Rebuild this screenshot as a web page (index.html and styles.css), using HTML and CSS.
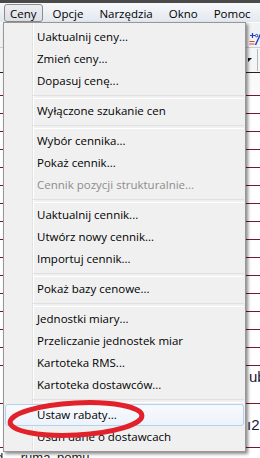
FILE: index.html
```html
<!DOCTYPE html>
<html lang="pl">
<head>
    <meta charset="UTF-8">
    <title>Ceny</title>
    <link rel="stylesheet" href="styles.css">
</head>
<body>
    <div class="window">
        <!-- Menu bar -->
        <div class="menubar">
            <span class="menubar-item active">Ceny</span>
            <span class="menubar-item">Opcje</span>
            <span class="menubar-item">Narzędzia</span>
            <span class="menubar-item">Okno</span>
            <span class="menubar-item">Pomoc</span>
        </div>

        <!-- Window content behind the menu -->
        <div class="workspace">
            <div class="toolbar">
                <svg class="tool-icon" width="12" height="14" viewBox="0 0 12 14">
                    <path d="M1 3.5h5M3.5 1v5" stroke="#1f3fbf" stroke-width="1.2" fill="none"/>
                    <path d="M0.5 9.5h5M0.5 12h5" stroke="#e0442a" stroke-width="1.2" fill="none"/>
                    <path d="M11.5 2L6.5 13" stroke="#1f3fbf" stroke-width="1.4" fill="none"/>
                    <circle cx="7.6" cy="3.6" r="1.2" stroke="#1f3fbf" fill="none"/>
                </svg>
            </div>
            <div class="combo-row">
                <span class="combo-arrow"></span>
                <span class="combo-edge"></span>
            </div>
            <div class="grid-header"></div>
            <div class="grid">
                <div class="row"></div>
                <div class="row"></div>
                <div class="row"></div>
                <div class="row"></div>
                <div class="row"></div>
                <div class="row"></div>
                <div class="row"></div>
                <div class="row"></div>
                <div class="row"></div>
                <div class="row"></div>
                <div class="row"></div>
                <div class="row"></div>
                <div class="row"></div>
                <div class="row"></div>
                <div class="row"></div>
                <div class="row tall"><span class="cell-text">ub</span></div>
                <div class="row tall second"><span class="cell-text">ı2</span></div>
                <div class="row last"><span class="cell-note">d - ruma pomu</span></div>
            </div>
        </div>

        <!-- Open "Ceny" menu -->
        <div class="dropdown">
            <div class="item">Uaktualnij ceny...</div>
            <div class="item">Zmień ceny...</div>
            <div class="item">Dopasuj cenę...</div>
            <div class="sep"></div>
            <div class="item">Wyłączone szukanie cen</div>
            <div class="sep"></div>
            <div class="item">Wybór cennika...</div>
            <div class="item">Pokaż cennik...</div>
            <div class="item disabled">Cennik pozycji strukturalnie...</div>
            <div class="sep"></div>
            <div class="item">Uaktualnij cennik...</div>
            <div class="item">Utwórz nowy cennik...</div>
            <div class="item">Importuj cennik...</div>
            <div class="sep"></div>
            <div class="item">Pokaż bazy cenowe...</div>
            <div class="sep"></div>
            <div class="item">Jednostki miary...</div>
            <div class="item">Przeliczanie jednostek miar</div>
            <div class="item">Kartoteka RMS...</div>
            <div class="item">Kartoteka dostawców...</div>
            <div class="sep"></div>
            <div class="item hover">Ustaw rabaty...</div>
            <div class="item">Usuń dane o dostawcach</div>
        </div>

        <!-- hand drawn marker -->
        <svg class="marker" width="160" height="50" viewBox="0 0 160 50">
            <ellipse cx="74" cy="24" rx="66" ry="16" transform="rotate(-3 74 24)" fill="none" stroke="#e2222b" stroke-width="5"/>
        </svg>
    </div>
</body>
</html>
```

FILE: styles.css
```css
* {
    margin: 0;
    padding: 0;
    box-sizing: border-box;
}

body {
    width: 260px;
    height: 458px;
    overflow: hidden;
    background: #fff;
    font-family: 'Open Sans', 'Noto Sans', sans-serif;
    font-size: 11.5px;
    color: #000;
}

.window {
    position: relative;
    width: 260px;
    height: 458px;
    overflow: hidden;
}

/* menu bar */

.menubar {
    display: flex;
    height: 22px;
    padding-top: 1px;
    padding-left: 2px;
    border-top: 3px solid #4a4a4a;
    background: linear-gradient(#f6f8fb, #e3e8ef);
}

.menubar-item {
    height: 18px;
    line-height: 17px;
    margin: 0 2px;
    padding: 0 5px;
    border: 1px solid transparent;
    border-radius: 3px;
}

.menubar-item.active {
    border-color: #8b8c8e;
    background: linear-gradient(#eceef1, #dcdfe4);
}

/* background window */

.workspace {
    background: #fff;
}

.toolbar {
    display: flex;
    justify-content: flex-end;
    height: 25px;
    padding-top: 9px;
    border-top: 1px solid #fbfcfd;
    background: #f1f2f4;
}

.tool-icon {
    margin-right: -1px;
}

.combo-row {
    display: flex;
    justify-content: flex-end;
    align-items: center;
    gap: 5px;
    height: 26px;
    border-top: 1px solid #c9ccd1;
    border-bottom: 1px solid #222;
    background: #f4f5f7;
}

.combo-arrow {
    width: 0;
    height: 0;
    border-top: 4px solid #111;
    border-right: 4px solid transparent;
}

.combo-edge {
    width: 2px;
    height: 22px;
    border-left: 1px solid #b7b9bd;
    margin-right: 1px;
}

.grid-header {
    height: 22px;
    background: #fafafa;
}

.grid {
    border-top: 1px solid #74192a;
}

.row {
    height: 18px;
    border-bottom: 1px solid #74192a;
    white-space: nowrap;
    overflow: hidden;
}

.row.tall {
    height: 38px;
    padding-top: 2px;
    padding-left: 249px;
}

.row.second {
    height: 44px;
    padding-top: 12px;
    padding-left: 247px;
}

.row.last {
    height: 20px;
    padding-top: 2px;
    border-bottom: none;
}

.cell-text {
    font-family: 'Liberation Sans', sans-serif;
    font-size: 15px;
    line-height: 17px;
    color: #1a1a3a;
}

.cell-note {
    display: inline-block;
    margin-left: -4px;
    font-family: 'Liberation Sans', sans-serif;
    font-size: 13px;
    line-height: 14px;
    word-spacing: 3px;
    color: #222;
}

/* dropdown menu */

.dropdown {
    position: absolute;
    left: 3px;
    top: 22px;
    width: 243px;
    padding: 3px 1px;
    border: 1px solid #979797;
    background:
        linear-gradient(to right, transparent 28px, #e2e3e3 28px, #e2e3e3 29px, #fff 29px, #fff 30px, transparent 30px),
        #f0f0f0;
    box-shadow: 2px 2px 3px rgba(0, 0, 0, 0.45);
}

.item {
    height: 22px;
    line-height: 22px;
    padding-left: 32px;
    white-space: nowrap;
}

.item.disabled {
    color: #8d8d8d;
}

.item.hover {
    line-height: 20px;
    padding-left: 31px;
    border: 1px solid #b4d2f0;
    border-radius: 3px;
    background: linear-gradient(#f7fafd, #edf3fb);
}

.sep {
    height: 8px;
    padding-top: 3px;
}

.sep::before {
    content: "";
    display: block;
    margin-left: 28px;
    height: 2px;
    border-top: 1px solid #e0e0e0;
    border-bottom: 1px solid #fff;
}

.marker {
    position: absolute;
    left: 2px;
    top: 395px;
}
```
